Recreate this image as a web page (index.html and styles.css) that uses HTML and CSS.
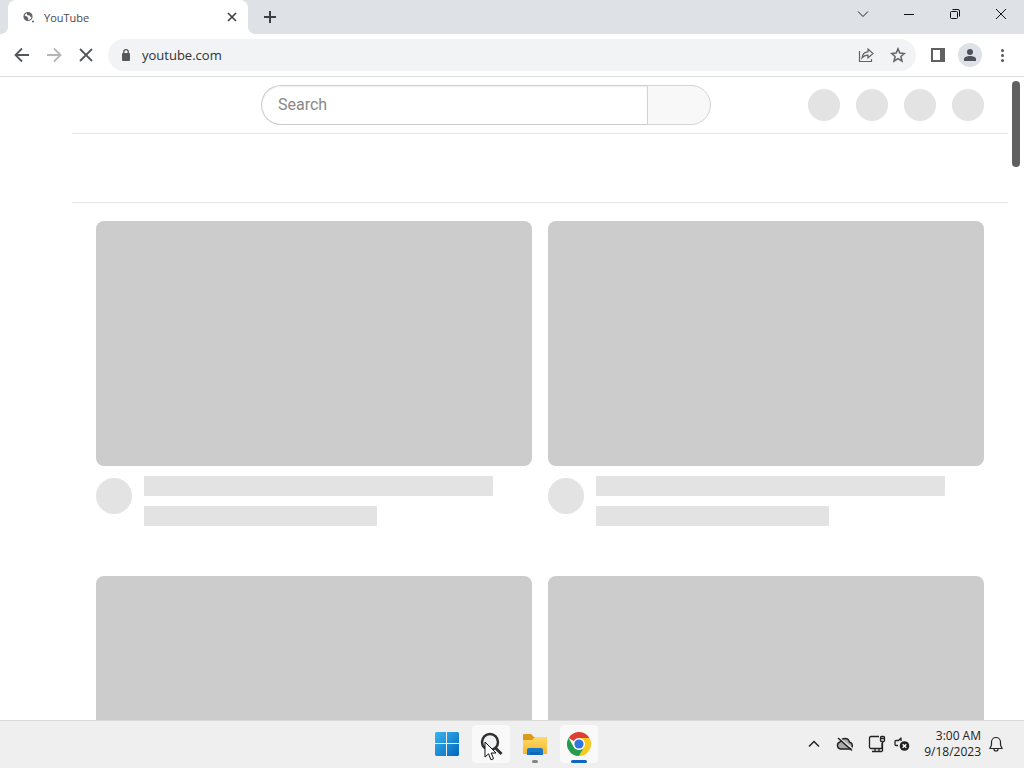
FILE: index.html
```html
<!DOCTYPE html>
<html lang="en">
<head>
  <meta charset="UTF-8">
  <meta name="viewport" content="width=device-width, initial-scale=1.0">
  <title>YouTube</title>
  <link rel="stylesheet" href="styles.css">
</head>
<body>
  <!-- Tab strip -->
  <header class="tab-strip">
    <div class="tab">
      <svg class="favicon" width="12" height="12" viewBox="0 0 12 12">
        <circle cx="5" cy="5.500" r="4" fill="#fff" stroke="#5f6368" stroke-width="1.200"/>
        <path d="M1 4.500l3 1 1.500 2-1 2C2 9.500 1 7.500 1 4.500zM4 1.500c3-.5 5 1.500 5 4L7.500 6 6.500 4.500 4 4z" fill="#5f6368"/>
        <circle cx="10" cy="10.500" r="1" fill="#5f6368"/>
      </svg>
      <span class="tab-title">YouTube</span>
      <button class="tab-close" aria-label="Close tab">
        <svg width="10" height="10" viewBox="0 0 10 10"><path d="M1 1l8 8M9 1l-8 8" stroke="#3c4043" stroke-width="1.600"/></svg>
      </button>
    </div>
    <button class="new-tab" aria-label="New tab">
      <svg width="12" height="12" viewBox="0 0 12 12"><path d="M6 0v12M0 6h12" stroke="#3c4043" stroke-width="2"/></svg>
    </button>
    <div class="window-controls">
      <button aria-label="Search tabs">
        <svg width="12" height="12" viewBox="0 0 12 12"><path d="M1 3.500l5 5 5-5" fill="none" stroke="#222"/></svg>
      </button>
      <button aria-label="Minimize">
        <svg width="12" height="12" viewBox="0 0 12 12"><path d="M1 6.500h10" stroke="#111"/></svg>
      </button>
      <button aria-label="Restore">
        <svg width="12" height="12" viewBox="0 0 12 12" fill="none" stroke="#111"><rect x="1.500" y="3.500" width="7" height="7" rx="1"/><path d="M3.500 1.500H9a1.500 1.500 0 0 1 1.500 1.500v5.500"/></svg>
      </button>
      <button aria-label="Close">
        <svg width="12" height="12" viewBox="0 0 12 12"><path d="M1 1l10 10M11 1L1 11" stroke="#111"/></svg>
      </button>
    </div>
  </header>

  <!-- Toolbar -->
  <nav class="toolbar">
    <button class="tool" aria-label="Back">
      <svg width="16" height="16" viewBox="0 0 16 16" fill="none" stroke="#55585b" stroke-width="1.800"><path d="M15 8H2M8 1.500L1.500 8 8 14.500"/></svg>
    </button>
    <button class="tool" aria-label="Forward" disabled>
      <svg width="16" height="16" viewBox="0 0 16 16" fill="none" stroke="#b4b6b8" stroke-width="1.800"><path d="M1 8h13M8 1.500L14.500 8 8 14.500"/></svg>
    </button>
    <button class="tool" aria-label="Stop loading">
      <svg width="16" height="16" viewBox="0 0 16 16" stroke="#55585b" stroke-width="1.800"><path d="M2 2l12 12M14 2L2 14"/></svg>
    </button>
    <div class="omnibox">
      <svg width="10" height="13" viewBox="0 0 10 13"><rect x="1" y="4" width="8" height="8" rx="1" fill="#55585b"/><path d="M2.700 5V3a2.300 2.300 0 0 1 4.600 0v2" fill="none" stroke="#55585b" stroke-width="1.300"/></svg>
      <input type="text" class="address" aria-label="Address" value="youtube.com">
      <button class="tool" aria-label="Share">
        <svg width="16" height="16" viewBox="0 0 16 16" fill="none" stroke="#606367" stroke-width="1.200"><path d="M1.500 4v10.500h12V12"/><path d="M4 11c.4-4 2.500-6 6-6.200V2L15 6.500 10 11V8.200C7.200 8.200 5.500 9 4 11z"/></svg>
      </button>
      <button class="tool" aria-label="Bookmark this tab">
        <svg width="16" height="16" viewBox="0 0 16 16" fill="none" stroke="#606367" stroke-width="1.500"><path d="M8 1.800l1.800 4.300 4.600.4-3.500 3 1.100 4.600-4-2.500-4 2.500 1.100-4.600-3.500-3 4.600-.4z"/></svg>
      </button>
    </div>
    <button class="tool" aria-label="Side panel">
      <svg width="16" height="16" viewBox="0 0 16 16"><path d="M1 1h14v14H1zM3 3v10h7V3z" fill="#606060" fill-rule="evenodd"/></svg>
    </button>
    <button class="tool profile" aria-label="Profile">
      <svg width="14" height="14" viewBox="0 0 14 14" fill="#4d515c"><circle cx="7" cy="4" r="3"/><path d="M1 13v-2c0-2 3-3 6-3s6 1 6 3v2z"/></svg>
    </button>
    <button class="tool" aria-label="Menu">
      <svg width="16" height="16" viewBox="0 0 16 16" fill="#55585b"><circle cx="8.500" cy="3.500" r="1.500"/><circle cx="8.500" cy="8.500" r="1.500"/><circle cx="8.500" cy="13.500" r="1.500"/></svg>
    </button>
  </nav>

  <!-- Page while loading -->
  <div class="viewport">
    <main class="page">
      <div class="masthead">
        <div class="masthead-start"></div>
        <form class="search">
          <input type="text" placeholder="Search" aria-label="Search">
          <button type="button" aria-label="Search"></button>
        </form>
        <div class="masthead-end">
          <span class="dot"></span>
          <span class="dot"></span>
          <span class="dot"></span>
          <span class="dot"></span>
        </div>
      </div>
      <div class="chips"></div>
      <div class="video-grid">
        <div class="video">
          <div class="thumb"></div>
          <div class="details">
            <span class="avatar"></span>
            <div class="lines"><span class="line title"></span><span class="line meta"></span></div>
          </div>
        </div>
        <div class="video">
          <div class="thumb"></div>
          <div class="details">
            <span class="avatar"></span>
            <div class="lines"><span class="line title"></span><span class="line meta"></span></div>
          </div>
        </div>
        <div class="video">
          <div class="thumb"></div>
        </div>
        <div class="video">
          <div class="thumb"></div>
        </div>
      </div>
    </main>
    <div class="scrollbar"><div class="scroll-thumb"></div></div>
  </div>

  <!-- Taskbar -->
  <footer class="taskbar">
    <div class="apps">
      <button class="app" aria-label="Start">
        <svg width="24" height="24" viewBox="0 0 24 24">
          <defs><linearGradient id="win" x1="0" y1="0" x2="24" y2="24" gradientUnits="userSpaceOnUse"><stop offset="0" stop-color="#3bb5ee"/><stop offset="1" stop-color="#0067bd"/></linearGradient></defs>
          <path d="M1 0h10v11H0V1zM12 0h11l1 1v10H12zM0 12h11v12H1l-1-1zM12 12h12v11l-1 1H12z" fill="url(#win)"/>
        </svg>
      </button>
      <button class="app active" aria-label="Search">
        <svg width="24" height="24" viewBox="0 0 24 24" fill="none"><circle cx="11" cy="10" r="8" fill="#f1f3f4" stroke="#303030" stroke-width="2.500"/><path d="M16.500 16l6 6" stroke="#303030" stroke-width="3"/></svg>
        <svg class="cursor" width="13" height="20" viewBox="0 0 13 20"><path d="M1 1v15l3.500-3.200L7 18.800l2.600-1.100L7.200 12H12z" fill="#fff" stroke="#111"/></svg>
      </button>
      <button class="app running" aria-label="File Explorer">
        <svg width="26" height="24" viewBox="0 0 26 24">
          <defs><linearGradient id="folder" x1="0" y1="0" x2="0" y2="1"><stop offset="0" stop-color="#ffda68"/><stop offset="1" stop-color="#f3b727"/></linearGradient></defs>
          <path d="M1 3q0-1 1-1h7l3 3h12q1 0 1 1v3H1z" fill="#d99b1c"/>
          <path d="M1 8h9l3-3h11q1 0 1 1v15q0 1-1 1H2q-1 0-1-1z" fill="url(#folder)"/>
          <path d="M5 23v-5q0-2 2-2h12q2 0 2 2v5z" fill="#1977c8"/>
          <path d="M8 20h10v3H8z" fill="#1268b8"/>
        </svg>
      </button>
      <button class="app active current" aria-label="Google Chrome">
        <svg width="24" height="24" viewBox="0 0 24 24">
          <path d="M12 12L1.600 6a12 12 0 0 1 20.800 0z" fill="#df4034"/>
          <path d="M12 12V6h10.400A12 12 0 0 1 12 24l5.200-9z" fill="#fbc91d"/>
          <path d="M1.600 6l5.200 9L12 18l5.200-3L12 24A12 12 0 0 1 1.600 6z" fill="#269d4d"/>
          <circle cx="12" cy="12" r="6" fill="#fff"/>
          <circle cx="12" cy="12" r="4.600" fill="#2f76e0"/>
        </svg>
      </button>
    </div>
    <div class="tray">
      <button aria-label="Show hidden icons">
        <svg width="12" height="12" viewBox="0 0 12 12"><path d="M1 8.500l5-5 5 5" fill="none" stroke="#222" stroke-width="1.500"/></svg>
      </button>
      <button aria-label="OneDrive">
        <svg width="18" height="16" viewBox="0 0 18 16"><path d="M4.500 13a3.600 3.600 0 0 1-.5-7C5 3.500 7 2.500 9 2.500s4 1.500 4.500 3.700a3.500 3.500 0 0 1 .3 6.800z" fill="#aaa" stroke="#222" stroke-width="1.400"/><path d="M3.500 2L17 13" stroke="#eee" stroke-width="1.200"/><path d="M2 2l14 12.500" stroke="#222" stroke-width="1.500"/></svg>
      </button>
      <button aria-label="Network">
        <svg width="18" height="18" viewBox="0 0 18 18" fill="none" stroke="#222" stroke-width="1.300"><path d="M11 1.500H3q-1.500 0-1.500 1.500v9q0 1.500 1.500 1.500h11V8M4 16.500h10M7 13.500v3M11 13.500v3"/><rect x="12.500" y="1.500" width="4" height="5" rx="1"/><path d="M13 3.500h3M14.500 6.500v10"/></svg>
      </button>
      <button aria-label="Volume muted">
        <svg width="16" height="16" viewBox="0 0 16 16"><path d="M7 2L4.500 4.500H2q-1 0-1 1v3q0 1 1 1h2M7 1.500V5" fill="none" stroke="#222" stroke-width="1.300"/><circle cx="10.500" cy="10" r="4.800" fill="#222"/><path d="M8.700 8.200l3.600 3.600M12.300 8.200l-3.600 3.600" stroke="#fff" stroke-width="1.300"/></svg>
      </button>
      <div class="clock">
        <div>3:00 AM</div>
        <div>9/18/2023</div>
      </div>
      <button aria-label="Notifications">
        <svg width="14" height="16" viewBox="0 0 14 16" fill="none" stroke="#222" stroke-width="1.200"><path d="M2.500 9V6a4.500 4.500 0 0 1 9 0v3l1.500 3.500H1zM5 13a2 2 0 0 0 4 0"/></svg>
      </button>
    </div>
  </footer>
</body>
</html>
```
FILE: styles.css
```css
* {
  box-sizing: border-box;
}

body {
  margin: 0;
  height: 100vh;
  display: flex;
  flex-direction: column;
  overflow: hidden;
  background-color: #fff;
  font-family: "Open Sans", "Noto Sans", sans-serif;
  font-size: 11px;
  color: #333;
}

button {
  display: flex;
  align-items: center;
  justify-content: center;
  flex: none;
  padding: 0;
  border: none;
  background: none;
}

svg {
  display: block;
  flex: none;
}

/* Tab strip */
.tab-strip {
  flex: none;
  display: flex;
  height: 34px;
  padding-left: 8px;
  background-color: #dee1e6;
}

.tab {
  position: relative;
  display: flex;
  align-items: center;
  width: 240px;
  padding: 0 8px 0 15px;
  background-color: #fff;
  border-radius: 8px 8px 0 0;
}

.tab::before,
.tab::after {
  content: "";
  position: absolute;
  bottom: 0;
  width: 8px;
  height: 8px;
}

.tab::before {
  right: 100%;
  background: radial-gradient(circle at 0 0, transparent 8px, #fff 8px);
}

.tab::after {
  left: 100%;
  background: radial-gradient(circle at 100% 0, transparent 8px, #fff 8px);
}

.tab-title {
  flex: 1;
  margin-left: 9px;
  color: #45484c;
}

.tab-close {
  width: 16px;
  height: 16px;
}

.new-tab {
  width: 28px;
  margin-left: 8px;
}

.window-controls {
  display: flex;
  margin-left: auto;
}

.window-controls button {
  width: 46px;
  height: 28px;
}

/* Toolbar */
.toolbar {
  flex: none;
  display: flex;
  align-items: center;
  gap: 8px;
  height: 43px;
  padding: 0 10px;
  border-bottom: 1px solid #dcdddf;
}

.tool {
  width: 24px;
  height: 24px;
}

.omnibox {
  flex: 1;
  display: flex;
  align-items: center;
  gap: 8px;
  height: 32px;
  margin-left: 2px;
  padding: 0 6px 0 13px;
  border-radius: 16px;
  background-color: #f1f3f4;
}

.address {
  flex: 1;
  min-width: 0;
  margin-left: 3px;
  padding: 0;
  border: none;
  outline: none;
  background: none;
  font: 13px "Open Sans", "Noto Sans", sans-serif;
  color: #303236;
}

.omnibox + .tool {
  margin-left: 2px;
}

.profile {
  border-radius: 50%;
  background-color: #dee1e6;
}

/* Loading page */
.viewport {
  flex: 1;
  min-height: 0;
  display: flex;
}

.page {
  flex: 1;
  min-width: 0;
  overflow: hidden;
  padding-left: 72px;
}

.masthead {
  display: flex;
  align-items: center;
  justify-content: space-between;
  height: 57px;
  padding: 0 24px;
  border-bottom: 1px solid #e5e5e5;
}

.masthead-start {
  width: 68px;
}

.search {
  display: flex;
  width: 450px;
  height: 40px;
}

.search input {
  flex: 1;
  min-width: 0;
  padding: 0 16px 2px;
  border: 1px solid #ccc;
  border-right: none;
  border-radius: 20px 0 0 20px;
  outline: none;
  box-shadow: inset 0 1px 2px #eee;
  font: 16px Roboto, sans-serif;
}

.search input::placeholder {
  color: #888;
}

.search button {
  width: 64px;
  border: 1px solid #d3d3d3;
  border-radius: 0 20px 20px 0;
  background-color: #f8f8f8;
}

.masthead-end {
  display: flex;
  gap: 16px;
}

.dot {
  width: 32px;
  height: 32px;
  border-radius: 50%;
  background-color: #e3e3e3;
}

.chips {
  height: 69px;
  border-bottom: 1px solid #e5e5e5;
}

.video-grid {
  display: grid;
  grid-template-columns: 1fr 1fr;
  gap: 50px 16px;
  padding: 18px 24px;
}

.thumb {
  aspect-ratio: 16 / 9;
  border-radius: 8px;
  background-color: #ccc;
}

.details {
  display: flex;
  gap: 12px;
  padding-top: 10px;
}

.avatar {
  flex: none;
  width: 36px;
  height: 36px;
  margin-top: 2px;
  border-radius: 50%;
  background-color: #e3e3e3;
}

.lines {
  flex: 1;
  display: flex;
  flex-direction: column;
  gap: 10px;
}

.line {
  height: 20px;
  border-radius: 1px;
  background-color: #e3e3e3;
}

.title {
  width: 90%;
}

.meta {
  width: 60%;
}

.scrollbar {
  width: 16px;
  padding: 4px;
}

.scroll-thumb {
  height: 86px;
  border-radius: 4px;
  background-color: #606060;
}

/* Taskbar */
.taskbar {
  flex: none;
  display: grid;
  grid-template-columns: 1fr auto 1fr;
  height: 48px;
  padding-bottom: 2px;
  border-top: 1px solid #d9d9d9;
  background-color: #efefef;
}

.apps {
  grid-column: 2;
  display: flex;
  align-items: center;
  gap: 6px;
  padding-left: 2px;
}

.app {
  position: relative;
  width: 38px;
  height: 38px;
  border-radius: 4px;
}

.active {
  background-color: #f9f9f9;
}

.running::after,
.current::after {
  content: "";
  position: absolute;
  bottom: 0;
  width: 6px;
  height: 3px;
  border-radius: 2px;
  background-color: #868686;
}

.current::after {
  width: 16px;
  background-color: #0f67c0;
}

.cursor {
  position: absolute;
  left: 12px;
  top: 16px;
}

.tray {
  display: flex;
  align-items: center;
  justify-content: flex-end;
  gap: 10px;
  padding-right: 21px;
}

.tray button:first-child {
  margin-right: 6px;
}

.tray button:nth-child(3) {
  margin-left: 4px;
  margin-right: -2px;
}

.clock {
  margin-left: 4px;
  margin-right: -2px;
  font-size: 12px;
  line-height: 16px;
  text-align: right;
  color: #222;
}
```
